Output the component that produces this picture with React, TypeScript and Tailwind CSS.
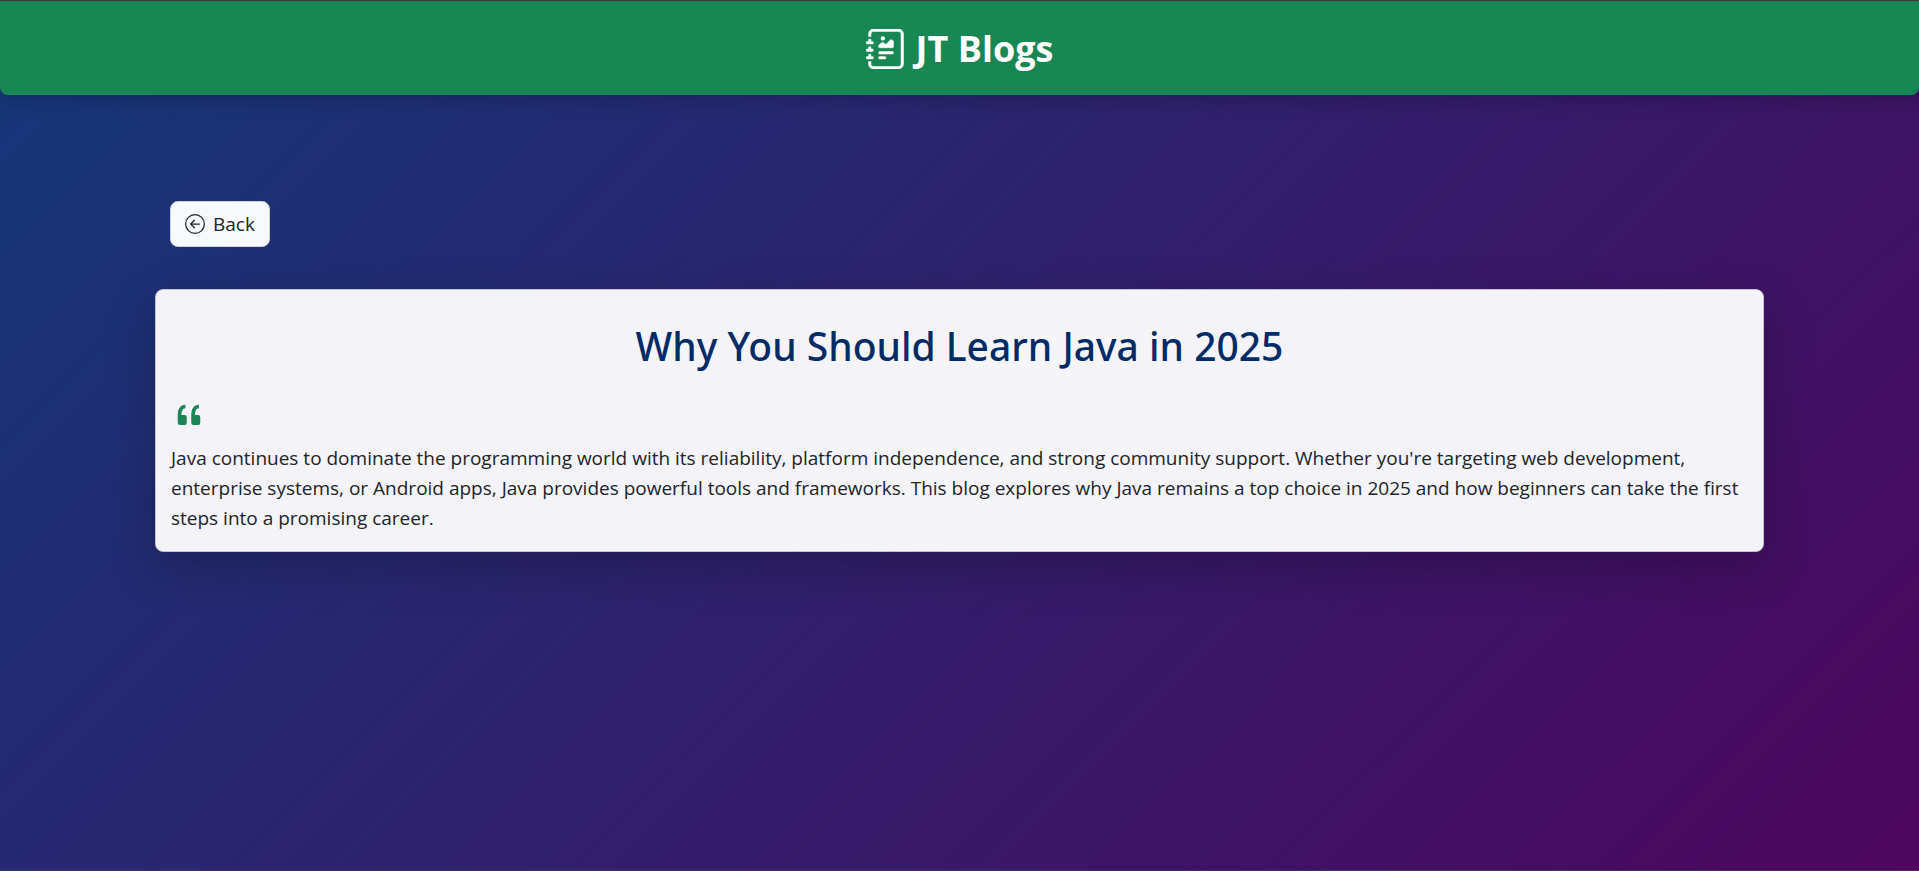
import { BsArrowLeftCircle, BsJournalRichtext, BsQuote } from "react-icons/bs";

const post = {
  title: "Why You Should Learn Java in 2025",
  body: "Java continues to dominate the programming world with its reliability, platform independence, and strong community support. Whether you're targeting web development, enterprise systems, or Android apps, Java provides powerful tools and frameworks. This blog explores why Java remains a top choice in 2025 and how beginners can take the first steps into a promising career.",
};

function Header() {
  return (
    <header className="flex items-center justify-center gap-2.5 rounded-b-lg bg-[#198754] pt-[21px] pb-[19px] text-white shadow-[0_8px_16px_rgba(0,0,0,0.15)]">
      <BsJournalRichtext className="size-10 stroke-current stroke-[0.2]" aria-hidden="true" />
      <h1 className="text-4xl leading-[54px] font-bold">JT Blogs</h1>
    </header>
  );
}

function Article() {
  return (
    <article className="mt-[42px] rounded-lg border border-[#c3c2cc] bg-[linear-gradient(135deg,#f4f3f8_42%,#f5f5f7_53%,#f4f3f8_64%)] px-[15px] pt-[31px] pb-[18px] shadow-[0_16px_48px_rgba(0,0,0,0.22)]">
      <h2 className="text-center font-['Noto_Sans','Open_Sans',sans-serif] text-[39px] leading-[50px] font-medium text-[#002b66]">
        {post.title}
      </h2>
      <BsQuote className="mt-[27px] size-9 text-[#198754]" aria-hidden="true" />
      <p className="mt-[9px] text-[19px] leading-[30px] text-[#212529]">{post.body}</p>
    </article>
  );
}

export default function App() {
  return (
    <div className="flex min-h-screen flex-col border-y border-[#3c3c3c] bg-[linear-gradient(135deg,#14387a,#4d065e)] bg-[#3c3c3c] font-['Open_Sans','Noto_Sans',sans-serif]">
      <Header />
      <main className="mx-auto w-full max-w-[1609px] pt-[106px]">
        <button
          type="button"
          className="ml-[15px] flex items-center gap-2 rounded-lg border border-[#ced4da] bg-[#f8f9fa] px-3.5 py-[7px] text-[19px] leading-[30px] text-[#212529]"
        >
          <BsArrowLeftCircle className="size-5" aria-hidden="true" />
          Back
        </button>
        <Article />
      </main>
    </div>
  );
}
